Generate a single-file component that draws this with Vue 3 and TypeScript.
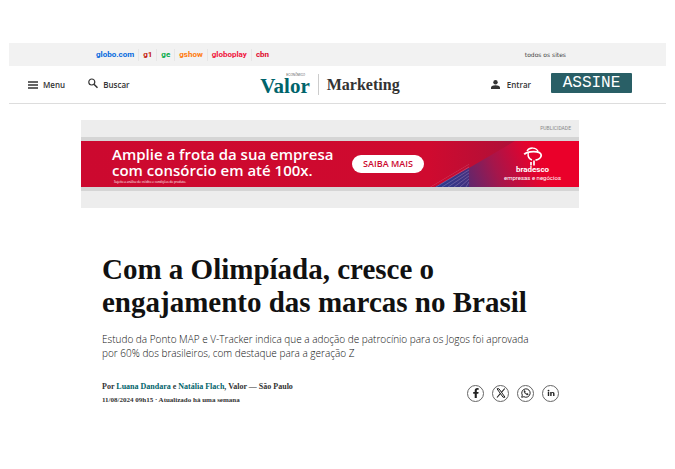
<script setup lang="ts">
interface SiteLink {
  name: string
  tone: string
}

const sites: SiteLink[] = [
  { name: 'globo.com', tone: 'blue' },
  { name: 'g1', tone: 'crimson' },
  { name: 'ge', tone: 'green' },
  { name: 'gshow', tone: 'orange' },
  { name: 'globoplay', tone: 'red' },
  { name: 'cbn', tone: 'scarlet' },
]

const stripes: number[] = [0, 3, 6, 9, 12, 15, 18]
</script>

<template>
  <div class="page">
    <nav class="sites" aria-label="Sites Globo">
      <ul class="site-list">
        <li v-for="site in sites" :key="site.name">
          <a href="#" :class="site.tone">{{ site.name }}</a>
        </li>
      </ul>
      <a href="#" class="all-sites">todos os sites</a>
    </nav>

    <header class="header">
      <div class="tools">
        <button type="button" class="tool">
          <svg width="10" height="8" viewBox="0 0 10 8" aria-hidden="true">
            <path d="M0 1h10M0 4h10M0 7h10" stroke="#333" stroke-width="1.4" />
          </svg>
          Menu
        </button>
        <button type="button" class="tool search">
          <svg width="10" height="14" viewBox="0 0 10 14" fill="none" stroke="#333" aria-hidden="true">
            <circle cx="3.8" cy="4" r="3" stroke-width="1.2" />
            <path d="M6 6.200l3.500 3.500" stroke-width="1.5" />
          </svg>
          Buscar
        </button>
      </div>
      <div class="brand">
        <a href="#" class="valor"><span class="economico">ECONÔMICO</span><span class="wordmark">Valor</span></a>
        <a href="#" class="section">Marketing</a>
      </div>
      <div class="account">
        <button type="button" class="tool">
          <svg width="9" height="9" viewBox="0 0 9 9" fill="#333" aria-hidden="true">
            <circle cx="4.5" cy="2.2" r="2.2" />
            <path d="M0 9V7.6C0 6 3 5.3 4.5 5.3S9 6 9 7.6V9z" />
          </svg>
          Entrar
        </button>
        <a href="#" class="subscribe">ASSINE</a>
      </div>
    </header>

    <aside class="ad">
      <p class="ad-label">PUBLICIDADE</p>
      <div class="banner">
        <svg class="art" viewBox="0 0 498 46" preserveAspectRatio="none" aria-hidden="true">
          <defs>
            <linearGradient id="base" x1="0" x2="1">
              <stop offset="0" stop-color="#cc092f" />
              <stop offset="0.7" stop-color="#cf0a2f" />
              <stop offset="0.86" stop-color="#b01038" />
            </linearGradient>
            <linearGradient id="glow" gradientUnits="userSpaceOnUse" x1="378" y1="46" x2="462" y2="14">
              <stop offset="0" stop-color="#4a2c78" />
              <stop offset="0.45" stop-color="#a5164b" />
              <stop offset="0.85" stop-color="#e2032e" />
              <stop offset="1" stop-color="#ea002a" />
            </linearGradient>
            <linearGradient id="corner" gradientUnits="userSpaceOnUse" x1="357" y1="46" x2="388" y2="36">
              <stop offset="0" stop-color="#293c8f" />
              <stop offset="1" stop-color="#45307f" />
            </linearGradient>
            <clipPath id="wedge"><path d="M349 46L388 23V46z" /></clipPath>
          </defs>
          <path d="M0 0h498v46H0z" fill="url(#base)" />
          <path d="M434 0h64v46H354L388 27z" fill="url(#glow)" />
          <path d="M354 46L388 27V46z" fill="url(#corner)" />
          <g clip-path="url(#wedge)" stroke="#d5b9d8" stroke-width="0.5" opacity="0.6">
            <path v-for="s in stripes" :key="s" :d="`M${349 + s * 2} 46L388 ${23 + s}`" />
          </g>
        </svg>
        <div class="pitch">
          <p class="offer">Amplie a frota da sua empresa<br />com consórcio em até 100x.</p>
          <p class="terms">Sujeito a análise de crédito e condições do produto.</p>
        </div>
        <a href="#" class="more">SAIBA MAIS</a>
        <div class="bradesco">
          <svg width="20" height="19" viewBox="0 0 20 19" fill="none" stroke="#fff" aria-hidden="true">
            <path d="M4 4C6.500 0 13 0 15.200 4.600" stroke-width="1.400" />
            <path d="M1.200 7.400C4 4 17.500 3 18.200 8 18.400 10.600 15.500 12.700 12.500 13.200" stroke-width="1.800" />
            <path d="M5.200 6C4.600 9.500 6.500 12 9 13" stroke-width="1.400" />
            <path d="M8 18.500v-3.500M11 18.500v-5" stroke-width="1.700" />
          </svg>
          <strong>bradesco</strong>
          <span>empresas e negócios</span>
        </div>
      </div>
    </aside>

    <main class="article">
      <h1>Com a Olimpíada, cresce o engajamento das marcas no Brasil</h1>
      <p class="summary">
        Estudo da Ponto MAP e V-Tracker indica que a adoção de patrocínio para os Jogos foi aprovada
        por 60% dos brasileiros, com destaque para a geração Z
      </p>
      <div class="meta">
        <div>
          <p class="byline">
            Por <a href="#">Luana Dandara</a> e <a href="#">Natália Flach</a>, Valor — São Paulo
          </p>
          <p class="date">11/08/2024 09h15 · Atualizado há uma semana</p>
        </div>
        <div class="share">
          <a href="#" aria-label="Facebook">
            <svg width="10" height="10" viewBox="0 0 10 10" fill="#222">
              <path d="M3.700 10V5.700H2.200V3.900h1.500V2.700C3.700 1 4.700.1 6.200.1L7.700.2v1.600h-.9c-.8 0-1 .4-1 1v1.100h1.800l-.3 1.800H5.800V10z" />
            </svg>
          </a>
          <a href="#" aria-label="X">
            <svg width="10" height="10" viewBox="0 0 10 10" fill="none" stroke="#222">
              <path d="M1 .8h2l6 8.400H7z" stroke-width="1" />
              <path d="M8.800.5L5.600 4.200M4.300 5.700L1 9.500" stroke-width="1.100" />
            </svg>
          </a>
          <a href="#" aria-label="WhatsApp">
            <svg width="10" height="10" viewBox="0 0 10 10" fill="none" stroke="#222">
              <path d="M.7 9.300l.6-2.200A4.200 4.200 0 1 1 2.900 8.700z" stroke-width="1" />
              <path d="M3.300 2.600c-1 1.400 1.600 4.600 3.500 4.300l.5-.9-1.200-.7-.6.500C4.700 5.500 4.200 5 4 4.300l.4-.5-.5-1.200z" fill="#222" stroke-width=".4" />
            </svg>
          </a>
          <a href="#" aria-label="LinkedIn">
            <svg width="8" height="8" viewBox="0 0 8 8" fill="#222">
              <circle cx="1.500" cy="1.600" r=".9" />
              <path d="M.8 3h1.400v4H.8zM3.200 3h1.300v.6C4.800 3.100 5.300 2.900 5.900 2.900 7.100 2.900 7.500 3.700 7.500 4.900V7H6.100V5.100c0-.6-.1-1-.7-1s-.8.400-.8 1V7H3.200z" />
            </svg>
          </a>
        </div>
      </div>
    </main>
  </div>
</template>

<style>
body {
  margin: 0;
  background: #fff;
}
</style>

<style scoped>
.page {
  padding: 43px 9px 0;
  font-family: 'Open Sans', 'Noto Sans', sans-serif;
  color: #333;
}

a {
  color: inherit;
  text-decoration: none;
}

p,
h1,
ul {
  margin: 0;
  padding: 0;
}

.sites {
  display: flex;
  align-items: center;
  justify-content: space-between;
  height: 23px;
  padding: 0 100px 0 87px;
  background: #f2f2f2;
}

.site-list {
  display: flex;
  list-style: none;
  font: bold 8px/12px Roboto, sans-serif;
}

.site-list li + li {
  margin-left: 4px;
  padding-left: 4px;
  border-left: 1px solid #e6e6e6;
}

.blue { color: #0669de; }
.crimson { color: #c4170c; }
.green { color: #06aa48; }
.orange { color: #ff7a0a; }
.red { color: #f0143c; }
.scarlet { color: #e00a2c; }

.all-sites {
  font: 6px/20px 'DejaVu Sans', sans-serif;
  color: #444;
}

.header {
  display: grid;
  grid-template-columns: 1fr auto 1fr;
  align-items: center;
  height: 37px;
  padding: 0 34px 0 19px;
  border-bottom: 1px solid #ddd;
}

.tools,
.account {
  display: flex;
  align-items: center;
}

.tools {
  gap: 23px;
}

.account {
  justify-content: flex-end;
  gap: 20px;
}

.tool {
  display: flex;
  align-items: center;
  gap: 5px;
  padding: 0;
  border: 0;
  background: none;
  color: #333;
  font: 600 8px/12px 'Open Sans', sans-serif;
}

.account .tool {
  gap: 7px;
}

.subscribe {
  width: 81px;
  margin-bottom: 3px;
  border-radius: 1px;
  background: #295f66;
  color: #fff;
  text-align: center;
  font: 16px/20px 'Liberation Mono', monospace;
}

.brand {
  display: flex;
  align-items: center;
  font-family: 'Liberation Serif', serif;
  font-weight: bold;
}

.valor {
  display: flex;
  flex-direction: column;
  padding-right: 8px;
  border-right: 1px solid #ccc;
  color: #00646b;
}

.wordmark {
  font-size: 21px;
  line-height: 18px;
}

.economico {
  padding-left: 26px;
  color: #555;
  font: 3px/3px 'Liberation Sans', sans-serif;
}

.section {
  padding-left: 8px;
  font-size: 16px;
  line-height: 20px;
}

.ad {
  margin: 16px 87px 0 72px;
  padding-bottom: 17px;
  background: #ededed;
}

.ad-label {
  padding-right: 8px;
  color: #888;
  text-align: right;
  font: 5px/17px Roboto, sans-serif;
}

.banner {
  position: relative;
  display: flex;
  align-items: center;
  height: 46px;
  border: solid #d5d5d5;
  border-width: 4px 0;
  color: #fff;
}

.art {
  position: absolute;
  inset: 0;
  width: 100%;
  height: 100%;
}

.pitch,
.more,
.bradesco {
  position: relative;
}

.pitch {
  flex: 1;
  padding: 2px 0 0 31px;
}

.offer {
  font: 600 15px/16px 'Open Sans', sans-serif;
}

.terms {
  padding: 2px 0 0 2px;
  font: 3px/4px 'Open Sans', sans-serif;
}

.more {
  width: 72px;
  margin-right: 80px;
  border-radius: 9px;
  background: #fff;
  color: #cc092f;
  text-align: center;
  font: 600 9px/18px 'Open Sans', sans-serif;
}

.bradesco {
  display: flex;
  flex-direction: column;
  align-items: center;
  margin-right: 18px;
  font: 6px/8px Roboto, sans-serif;
}

.bradesco strong {
  font-size: 8px;
}

.article {
  padding: 45px 107px 0 93px;
}

h1 {
  color: #111;
  font: bold 29px/33px 'Liberation Serif', serif;
}

.summary {
  max-width: 440px;
  margin-top: 13px;
  color: #111;
  font-size: 10px;
  font-weight: 300;
  line-height: 14px;
}

.meta {
  display: flex;
  justify-content: space-between;
  align-items: center;
  margin-top: 20px;
  font-family: 'Liberation Serif', serif;
  font-weight: bold;
}

.byline {
  font-size: 8px;
  line-height: 14px;
}

.byline a {
  color: #00646b;
}

.date {
  font-size: 7px;
  line-height: 12px;
}

.share {
  display: flex;
  gap: 8px;
}

.share a {
  display: flex;
  align-items: center;
  justify-content: center;
  width: 15px;
  height: 15px;
  border: 1px solid #666;
  border-radius: 50%;
}
</style>
